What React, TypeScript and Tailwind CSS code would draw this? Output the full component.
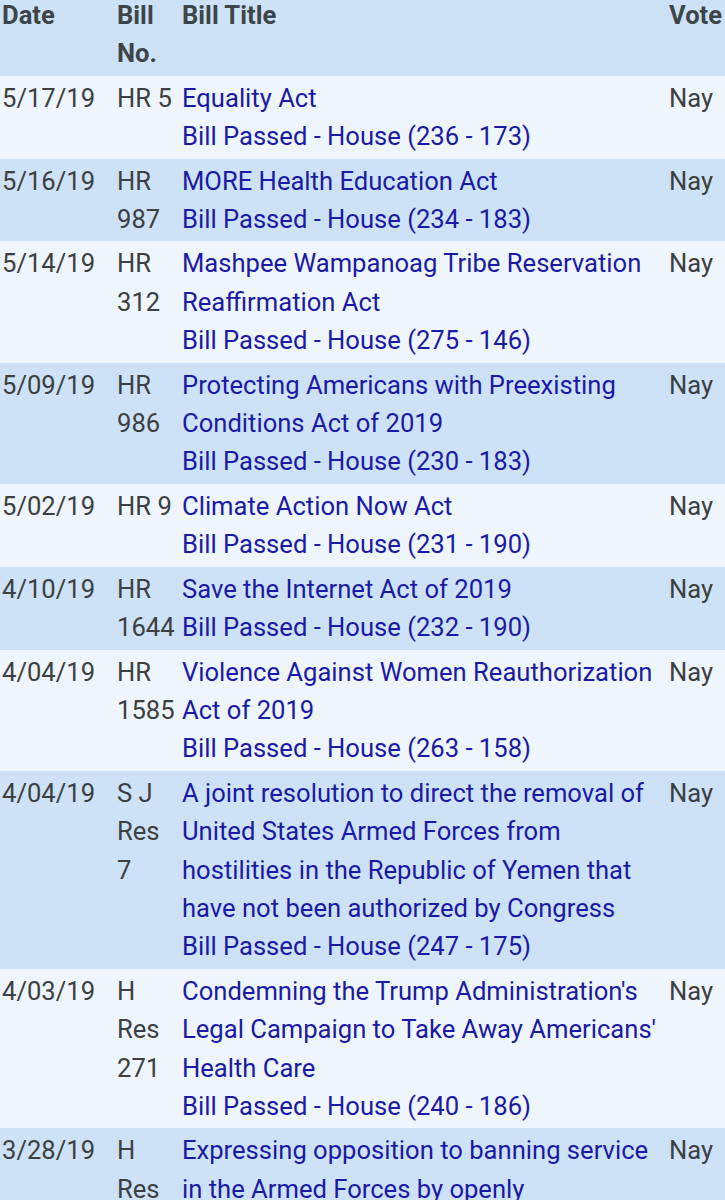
import React from "react";

interface Vote {
  date: string;
  bill: string;
  title: string;
  result: string;
}

const votes: Vote[] = [
  { date: "5/17/19", bill: "HR 5", title: "Equality Act", result: "Bill Passed - House (236 - 173)" },
  { date: "5/16/19", bill: "HR 987", title: "MORE Health Education Act", result: "Bill Passed - House (234 - 183)" },
  { date: "5/14/19", bill: "HR 312", title: "Mashpee Wampanoag Tribe Reservation Reaffirmation Act", result: "Bill Passed - House (275 - 146)" },
  { date: "5/09/19", bill: "HR 986", title: "Protecting Americans with Preexisting Conditions Act of 2019", result: "Bill Passed - House (230 - 183)" },
  { date: "5/02/19", bill: "HR 9", title: "Climate Action Now Act", result: "Bill Passed - House (231 - 190)" },
  { date: "4/10/19", bill: "HR 1644", title: "Save the Internet Act of 2019", result: "Bill Passed - House (232 - 190)" },
  { date: "4/04/19", bill: "HR 1585", title: "Violence Against Women Reauthorization Act of 2019", result: "Bill Passed - House (263 - 158)" },
  {
    date: "4/04/19",
    bill: "S J Res 7",
    title: "A joint resolution to direct the removal of United States Armed Forces from hostilities in the Republic of Yemen that have not been authorized by Congress",
    result: "Bill Passed - House (247 - 175)",
  },
  {
    date: "4/03/19",
    bill: "H Res 271",
    title: "Condemning the Trump Administration's Legal Campaign to Take Away Americans' Health Care",
    result: "Bill Passed - House (240 - 186)",
  },
  {
    date: "3/28/19",
    bill: "H Res 124",
    title: "Expressing opposition to banning service in the Armed Forces by openly transgender individuals",
    result: "Bill Passed - House (238 - 185)",
  },
];

const App: React.FC = () => {
  return (
    <div className="h-[1200px] w-[725px] overflow-hidden bg-[#eef5fc] font-['Roboto',sans-serif] text-[25.6px] leading-[38.4px] text-[#3c4043]">
      <table className="-mt-[7px] w-[740px] table-fixed border-collapse">
        <colgroup>
          <col className="w-[114px]" />
          <col className="w-[65px]" />
          <col className="w-[487px]" />
          <col className="w-[74px]" />
        </colgroup>
        <thead>
          <tr className="bg-[#cde2f6] text-left align-top font-bold text-[#3e454a]">
            <th className="py-[3px] pl-[2px] pr-[3px]">Date</th>
            <th className="py-[3px] pl-[3px] pr-0">Bill No.</th>
            <th className="py-[3px] pl-[3px] pr-[2px]">Bill Title</th>
            <th className="px-[3px] py-[3px]">Vote</th>
          </tr>
        </thead>
        <tbody>
          {votes.map((v, i) => (
            <tr key={i} className={i % 2 === 0 ? "bg-[#eef5fc] align-top" : "bg-[#cde2f6] align-top"}>
              <td className="py-[3px] pl-[2px] pr-[3px]">{v.date}</td>
              <td className="py-[3px] pl-[3px] pr-0">{v.bill}</td>
              <td className="py-[3px] pl-[3px] pr-[2px] text-[#1a1aa6]">
                <a href="#" className="block">{v.title}</a>
                <div>{v.result}</div>
              </td>
              <td className="px-[3px] py-[3px]">Nay</td>
            </tr>
          ))}
        </tbody>
      </table>
    </div>
  );
};

export default App;
